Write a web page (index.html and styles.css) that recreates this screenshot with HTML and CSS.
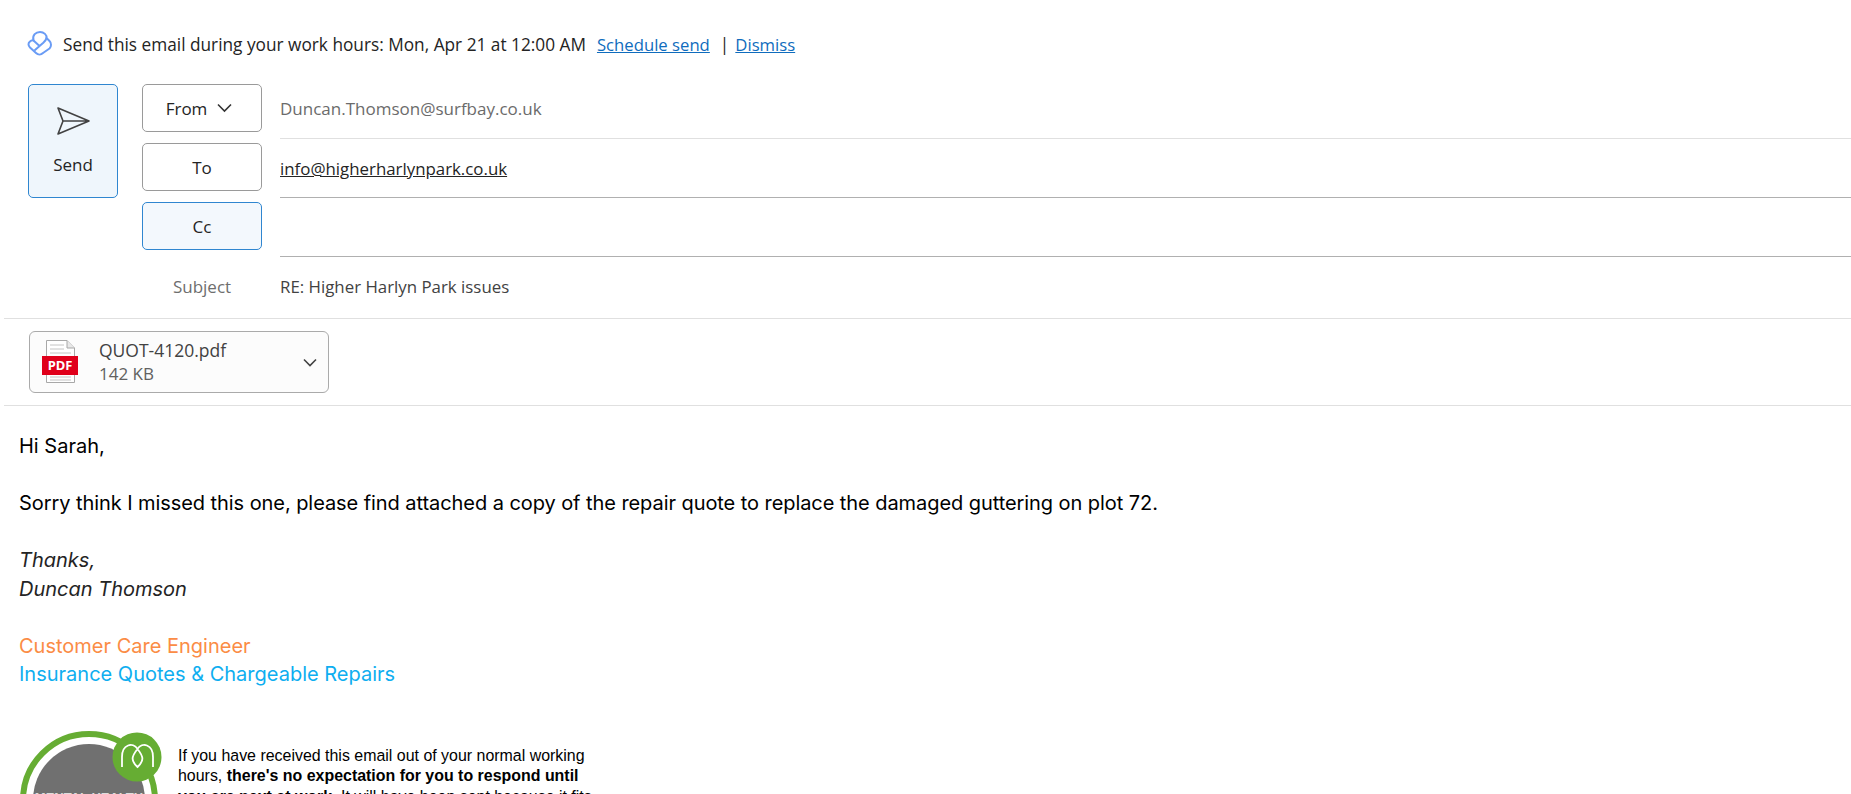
FILE: index.html
```html
<!DOCTYPE html>
<html lang="en">
<head>
<meta charset="utf-8">
<title>Compose</title>
<link rel="stylesheet" href="styles.css">
</head>
<body>
<div class="banner">
  <svg class="banner-icon" width="26" height="26" viewBox="0 0 26 26" fill="none" stroke="#6a9cf5" stroke-width="2" stroke-linecap="round" stroke-linejoin="round">
    <path d="M6.500 9.500 C5 4 9 1 13 1 C17 1 20 4 19.500 7 L22.500 10 C24.500 12 24.500 15.500 22.500 17.500 L16 22 C14 24 11 24 9 22 L3 16.500 C1 14.500 1 12 3 10.500 C4 9.500 5.500 9 6.500 9.500 Z"/>
    <path d="M6.500 9.500 L12.500 15 M8 19 L16 12 C17.500 10.500 19 9.500 19.500 7"/>
  </svg>
  <span class="banner-text">Send this email during your work hours: Mon, Apr 21 at 12:00 AM</span>
  <a class="link first-link">Schedule send</a>
  <span class="sep">|</span>
  <a class="link">Dismiss</a>
</div>
<div class="head">
  <button class="send">
    <svg width="36" height="30" viewBox="0 0 36 30" fill="none" stroke="#424242" stroke-width="1.6" stroke-linejoin="round"><path d="M3 2 L34 15 L3 28 L8 15 Z M8 15 L34 15"/></svg>
    <span>Send</span>
  </button>
  <div class="fields">
    <div class="row">
      <button class="pick from">From <svg width="15" height="10" viewBox="0 0 15 10" fill="none" stroke="#333" stroke-width="1.6"><path d="M1 1.500 L7.500 8 L14 1.500"/></svg></button>
      <div class="val muted first">Duncan.Thomson@surfbay.co.uk</div>
    </div>
    <div class="row">
      <button class="pick">To</button>
      <div class="val dark"><span class="recipient">info@higherharlynpark.co.uk</span></div>
    </div>
    <div class="row">
      <button class="pick cc">Cc</button>
      <div class="val dark"></div>
    </div>
    <div class="row subject">
      <div class="subject-label">Subject</div>
      <div class="subject-val">RE: Higher Harlyn Park issues</div>
    </div>
  </div>
</div>
<div class="attach-bar">
  <div class="attach">
    <svg class="pdf" width="36" height="44" viewBox="0 0 36 44">
      <path d="M4.5 .5 H25 L32.5 8 V42.5 H4.5 Z" fill="#fff" stroke="#a8a8a8"/>
      <path d="M25 .5 V8 H32.5" fill="#e8e8e8" stroke="#a8a8a8"/>
      <path d="M8 5 H22 M8 9 H22 M8 13 H29 M8 37 H29 M8 40 H29" stroke="#c4c4c4"/>
      <rect x="0" y="16" width="36" height="19" fill="#e0001b"/>
      <text x="18" y="30" class="pdf-text" text-anchor="middle">PDF</text>
    </svg>
    <div class="attach-text">
      <div class="attach-name">QUOT-4120.pdf</div>
      <div class="attach-size">142 KB</div>
    </div>
    <svg class="attach-chev" width="14" height="9" viewBox="0 0 14 9" fill="none" stroke="#424242" stroke-width="1.6"><path d="M1 1.5 L7 7.5 L13 1.5"/></svg>
  </div>
</div>
<div class="body">
  <p>Hi Sarah,</p>
  <p class="blank">&nbsp;</p>
  <p class="sorry">Sorry think I missed this one, please find attached a copy of the repair quote to replace the damaged guttering on plot 72.</p>
  <p class="blank">&nbsp;</p>
  <p class="ital">Thanks,</p>
  <p class="ital">Duncan Thomson</p>
  <p class="blank">&nbsp;</p>
  <p class="orange">Customer Care Engineer</p>
  <p class="blue">Insurance Quotes &amp; Chargeable Repairs</p>
  <div class="sig">
    <svg class="badge" width="146" height="150" viewBox="0 0 146 150">
      <circle cx="72" cy="69" r="66" fill="none" stroke="#66ad33" stroke-width="6"/>
      <circle cx="72" cy="69" r="56" fill="#707070"/>
      <text x="72" y="71" class="badge-text" text-anchor="middle">MENTAL HEALTH</text>
      <circle cx="120" cy="26" r="24.500" fill="#66ad33"/>
      <path d="M105 36 V26 C105 13 116 11 120.500 18 C125 11 136 13 136 26 V36 M120.500 18 C114 26 114 30 120.500 36 C127 30 127 26 120.500 18" fill="none" stroke="#fff" stroke-width="1.800"/>
    </svg>
    <p class="note">If you have received this email out of your normal working hours, <b>there's no expectation for you to respond until you are next at work.</b> It will have been sent because it fits</p>
  </div>
</div>
</body>
</html>
```
FILE: styles.css
```css
html, body { margin: 0; height: 794px; overflow: hidden; background: #fff; }
body { font-family: "Open Sans", "Noto Sans", sans-serif; color: #242424; font-size: 17px; }
button { font: inherit; color: inherit; cursor: pointer; }

.banner { display: flex; align-items: center; height: 26px; padding: 31px 0 0 27px; font-size: 17.250px; }
.banner-icon { margin-right: 10px; }
.link { color: #0f6cbd; text-decoration: underline; font-size: 16.700px; }
.first-link { margin-left: 11px; }
.sep { margin: 0 6px 0 10px; }

.head { display: flex; padding: 27px 0 0 28px; }
.send { width: 90px; height: 114px; box-sizing: border-box; background: #eff6fc; border: 1px solid #2f86d0; border-radius: 5px; display: flex; flex-direction: column; align-items: center; padding: 21px 0 0; gap: 17px; }
.fields { flex: 1; margin-left: 24px; }
.row { display: flex; height: 59px; }
.pick { width: 120px; height: 48px; box-sizing: border-box; background: #fff; border: 1px solid #9a9a9a; border-radius: 5px; display: flex; align-items: center; justify-content: center; gap: 10px; }
.pick.from { padding-right: 12px; }
.pick.cc { background: #f3f8fd; border-color: #2f86d0; }
.val { flex: 1; margin-left: 18px; height: 54px; line-height: 50px; border-bottom: 1px solid #b0b0b0; }
.val.first { border-bottom-color: #e0e0e0; }
.muted { color: #6b6b6b; }
.recipient { text-decoration: underline; font-size: 16.850px; line-height: 52px; display: inline-block; }
.subject { height: 57px; align-items: center; padding-bottom: 6px; box-sizing: border-box; }
.subject-label { width: 120px; text-align: center; color: #6e6e6e; }
.subject-val { margin-left: 18px; color: #424242; font-size: 16.850px; }

.attach-bar { margin-left: 4px; height: 88px; box-sizing: border-box; border-top: 1px solid #e0e0e0; border-bottom: 1px solid #e0e0e0; padding: 12px 0 0 25px; }
.attach { width: 300px; height: 62px; box-sizing: border-box; border: 1px solid #aaa; border-radius: 6px; background: #fcfcfc; display: flex; align-items: center; padding-left: 12px; }
.pdf-text { font: bold 13px "Noto Sans", sans-serif; fill: #fff; }
.attach-text { margin-left: 21px; flex: 1; line-height: 24px; color: #424242; }
.attach-name { font-size: 17.500px; }
.attach-size { color: #616161; }
.attach-chev { margin-right: 11px; }

.body { padding: 26px 0 0 19px; font-family: Inter, sans-serif; font-size: 20px; line-height: 28.500px; color: #000; }
.body p { margin: 0; }
.sorry { letter-spacing: -0.067px; }
.ital { font-style: italic; color: #242424; }
.orange { color: #fb8c45; }
.blue { color: #0eaef0; }
.sig { display: flex; margin-top: 42px; }
.badge { margin-left: -2px; flex: none; }
.body .note { width: 420px; margin: 15px 0 0 15px; font: 15.950px/20.500px "Liberation Sans", sans-serif; color: #000; }
.badge-text { font: bold 13px "Liberation Sans", sans-serif; fill: #ddd; }
```
